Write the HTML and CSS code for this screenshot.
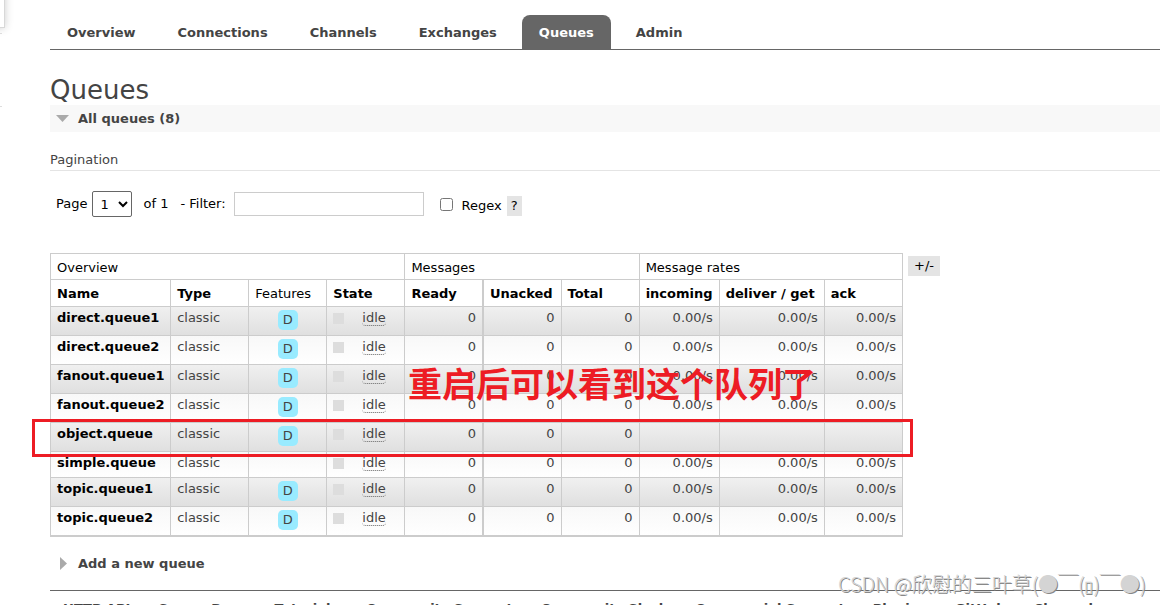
FILE: index.html
```html
<!DOCTYPE html>
<html lang="en">
<head>
<meta charset="utf-8">
<title>RabbitMQ Management</title>
<link rel="stylesheet" href="styles.css">
</head>
<body>
<div class="side-panel"></div>
<div class="side-tick"></div>
<div class="side-rule"></div>
<div class="page">
  <nav class="tabs">
    <a class="tab" href="#">Overview</a>
    <a class="tab" href="#">Connections</a>
    <a class="tab" href="#">Channels</a>
    <a class="tab" href="#">Exchanges</a>
    <a class="tab tab-selected" href="#">Queues</a>
    <a class="tab" href="#">Admin</a>
  </nav>
  <main>
    <h1>Queues</h1>
    <h2 class="section section-open"><svg class="arrow" width="13" height="13" viewBox="0 0 13 13"><path d="M0 3h13L6.500 10z" fill="#aaa"/></svg>All queues (8)</h2>
    <h3>Pagination</h3>
    <form class="filter">
      <label for="page">Page</label>
      <select id="page"><option>1</option></select>
      <span class="of">of 1</span>
      <label for="filter" class="filter-label">- Filter:</label>
      <input id="filter" type="text" class="filter-text">
      <input id="regex" type="checkbox" class="regex">
      <label for="regex" class="regex-label">Regex</label>
      <button type="button" class="help">?</button>
    </form>
    <div class="list">
      <div class="table-box">
        <table>
          <colgroup><col class="c-name"><col class="c-std"><col class="c-std"><col class="c-std"><col class="c-std"><col class="c-std"><col class="c-std"><col class="c-in"><col class="c-get"><col class="c-std"></colgroup>
          <thead>
            <tr><th colspan="4">Overview</th><th colspan="3">Messages</th><th colspan="3">Message rates</th></tr>
            <tr class="heads"><th><a href="#">Name</a></th><th><a href="#">Type</a></th><th>Features</th><th><a href="#">State</a></th><th class="thick"><a href="#">Ready</a></th><th><a href="#">Unacked</a></th><th><a href="#">Total</a></th><th><a href="#">incoming</a></th><th><a href="#">deliver / get</a></th><th><a href="#">ack</a></th></tr>
          </thead>
          <tbody>
            <tr><td><a href="#">direct.queue1</a></td><td>classic</td><td class="c"><abbr class="feature">D</abbr></td><td><div class="state"><i></i><abbr>idle</abbr></div></td><td class="r thick">0</td><td class="r">0</td><td class="r">0</td><td class="r">0.00/s</td><td class="r">0.00/s</td><td class="r">0.00/s</td></tr>
            <tr><td><a href="#">direct.queue2</a></td><td>classic</td><td class="c"><abbr class="feature">D</abbr></td><td><div class="state"><i></i><abbr>idle</abbr></div></td><td class="r thick">0</td><td class="r">0</td><td class="r">0</td><td class="r">0.00/s</td><td class="r">0.00/s</td><td class="r">0.00/s</td></tr>
            <tr><td><a href="#">fanout.queue1</a></td><td>classic</td><td class="c"><abbr class="feature">D</abbr></td><td><div class="state"><i></i><abbr>idle</abbr></div></td><td class="r thick">0</td><td class="r">0</td><td class="r">0</td><td class="r">0.00/s</td><td class="r">0.00/s</td><td class="r">0.00/s</td></tr>
            <tr><td><a href="#">fanout.queue2</a></td><td>classic</td><td class="c"><abbr class="feature">D</abbr></td><td><div class="state"><i></i><abbr>idle</abbr></div></td><td class="r thick">0</td><td class="r">0</td><td class="r">0</td><td class="r">0.00/s</td><td class="r">0.00/s</td><td class="r">0.00/s</td></tr>
            <tr><td><a href="#">object.queue</a></td><td>classic</td><td class="c"><abbr class="feature">D</abbr></td><td><div class="state"><i></i><abbr>idle</abbr></div></td><td class="r thick">0</td><td class="r">0</td><td class="r">0</td><td></td><td></td><td></td></tr>
            <tr class="plain"><td><a href="#">simple.queue</a></td><td>classic</td><td></td><td><div class="state"><i></i><abbr>idle</abbr></div></td><td class="r thick">0</td><td class="r">0</td><td class="r">0</td><td class="r">0.00/s</td><td class="r">0.00/s</td><td class="r">0.00/s</td></tr>
            <tr><td><a href="#">topic.queue1</a></td><td>classic</td><td class="c"><abbr class="feature">D</abbr></td><td><div class="state"><i></i><abbr>idle</abbr></div></td><td class="r thick">0</td><td class="r">0</td><td class="r">0</td><td class="r">0.00/s</td><td class="r">0.00/s</td><td class="r">0.00/s</td></tr>
            <tr><td><a href="#">topic.queue2</a></td><td>classic</td><td class="c"><abbr class="feature">D</abbr></td><td><div class="state"><i></i><abbr>idle</abbr></div></td><td class="r thick">0</td><td class="r">0</td><td class="r">0</td><td class="r">0.00/s</td><td class="r">0.00/s</td><td class="r">0.00/s</td></tr>
          </tbody>
        </table>
        <div class="note" lang="zh">重启后可以看到这个队列了</div>
        <div class="frame"></div>
      </div>
      <button type="button" class="columns">+/-</button>
    </div>
    <h2 class="section"><svg class="arrow" width="13" height="13" viewBox="0 0 13 13"><path d="M4 0v13L11 6.500z" fill="#aaa"/></svg>Add a new queue</h2>
  </main>
  <footer>
    <a href="#">HTTP API</a><a href="#">Server Docs</a><a href="#">Tutorials</a><a href="#">Community Support</a><a href="#">Community Slack</a><a href="#">Commercial Support</a><a href="#">Plugins</a><a href="#">GitHub</a><a href="#">Changelog</a>
  </footer>
</div>
<div class="watermark" lang="zh">CSDN @欣慰的三叶草(●￣(<span class="box">▯</span>)￣●)</div>
</body>
</html>
```
FILE: styles.css
```css
* { box-sizing: border-box; }
html, body { height: 100%; }
body {
  margin: 0;
  position: relative;
  overflow: hidden;
  background: #fff;
  color: #444;
  font: 13px/16px Verdana, "DejaVu Sans", sans-serif;
}
a { color: inherit; text-decoration: none; }
button, input, select { font: inherit; color: #000; margin: 0; }

.side-panel { position: absolute; left: -10px; top: -10px; width: 15px; height: 38px; border: 1px solid #d8d8d8; box-shadow: 0 0 8px #ccc; }
.side-tick { position: absolute; left: 0; top: 33px; width: 2px; height: 1px; background: #ddd; }
.side-rule { position: absolute; left: 0; top: 106px; width: 2px; height: 1px; background: #ddd; }

.page { padding: 15px 0 0 50px; }
.tabs { display: flex; gap: 8px; border-bottom: 1px solid #666; }
.tab { padding: 10px 17px 8px; font-weight: bold; border-radius: 8px 8px 0 0; }
.tab-selected { background: #666; color: #fff; }

h1 { margin: 25px 0 0; font-size: 26px; line-height: 30px; font-weight: normal; }
.section { display: flex; align-items: center; gap: 9px; margin: 0; padding: 5px 6px; font-size: 13px; line-height: 17px; font-weight: bold; }
.section-open { background: #f8f8f8; }
h3 { margin: 20px 0 0; padding-bottom: 2px; border-bottom: 1px solid #e4e4e4; font-size: 13px; font-weight: normal; }

.filter { display: flex; align-items: center; margin: 20px 0 36px; padding-left: 6px; color: #000; }
select { width: 40px; height: 26px; margin-left: 5px; padding: 0 0 0 3px; border: 1px solid #666; border-radius: 2px; background: #fff; }
.of { margin-left: 11px; }
.filter-label { margin-left: 12px; }
.filter-text { width: 190px; height: 24px; margin-left: 8px; border: 1px solid #ccc; }
.regex { width: 13px; height: 13px; margin-left: 16px; }
.regex-label { margin: 4px 0 0 9px; }
.help, .columns { border: 0; padding: 2px 6px; background: #e4e4e4; line-height: 16px; }
.help { margin: 4px 0 0 5px; padding: 2px 4px; }

.list { display: flex; align-items: flex-start; gap: 5px; }
.columns { margin-top: 3px; }
.table-box { position: relative; }
table { width: 853px; table-layout: fixed; border-collapse: collapse; border-bottom: 2px solid #ccc; }
.c-name { width: 120px; }
.c-std { width: 78px; }
.c-in { width: 80px; }
.c-get { width: 105px; }
th, td { border: 1px solid #ccc; padding: 4px 6px 0; text-align: left; vertical-align: top; white-space: nowrap; }
th { height: 26px; padding-top: 6px; font-weight: normal; color: #000; }
.heads th { height: 27px; }
th a, td a { font-weight: bold; color: #000; }
td { height: 29px; padding-top: 3px; }
.plain td { height: 26px; }
tbody tr { background: linear-gradient(#f8f8f8, #fff); }
tbody tr:nth-child(odd) { background: linear-gradient(#f0f0f0, #dfdfdf); }
.thick { border-right: 2px solid #ccc; }
.r { text-align: right; }
.c { text-align: center; }
.feature { display: inline-block; padding: 2px 5px; border-radius: 5px; background: #99ebff; }
.state { display: flex; align-items: center; gap: 18px; }
.state i { width: 11px; height: 11px; background: #ddd; }
.state abbr { border-bottom: 1px dotted #666; border-radius: 4px; line-height: 15px; }

.note { position: absolute; left: 358px; top: 106px; color: #ed1c24; font: bold 34px/48px "Noto Sans CJK SC", sans-serif; white-space: nowrap; }
.frame { position: absolute; left: -18px; right: -10px; top: 166px; height: 38px; border: 3px solid #ed1c24; }
main > .section:last-child { margin-top: 13px; }

footer { display: flex; gap: 28px; margin-top: 13px; padding: 10px 13px; border-top: 1px solid #666; font-weight: bold; white-space: nowrap; }
.watermark { position: absolute; right: 14px; bottom: 3px; color: #d4d4d4; font: 300 20px/30px "Noto Sans CJK SC", sans-serif; text-shadow: 1px 1px 0 #888; white-space: nowrap; }
.box { font-family: "DejaVu Sans", sans-serif; font-size: 16px; }
```
